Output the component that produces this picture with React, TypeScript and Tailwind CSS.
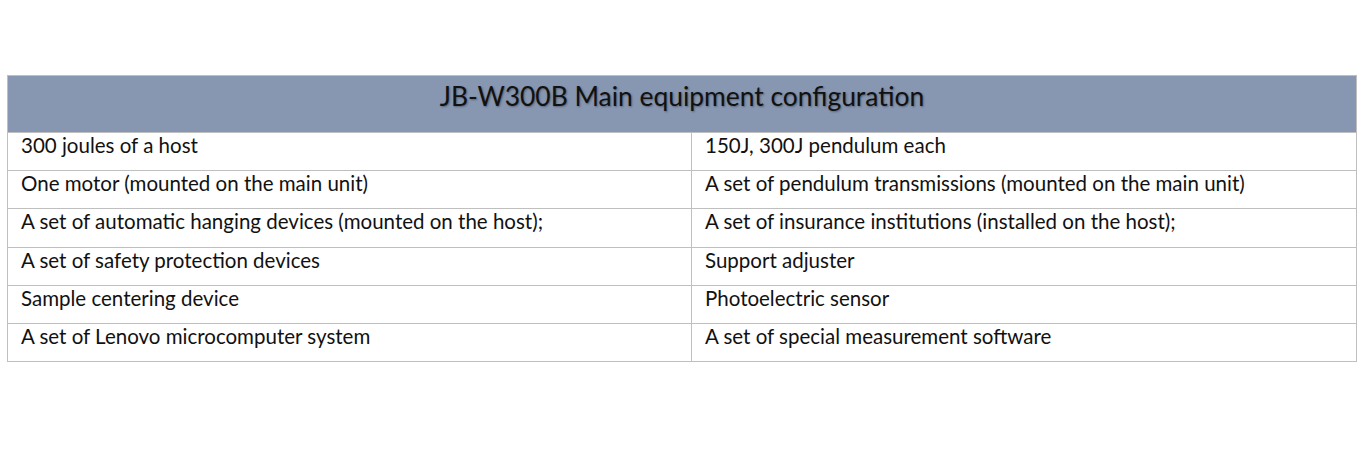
import React from "react";

const rows: [string, string][] = [
  ["300 joules of a host", "150J, 300J pendulum each"],
  ["One motor (mounted on the main unit)", "A set of pendulum transmissions (mounted on the main unit)"],
  ["A set of automatic hanging devices (mounted on the host);", "A set of insurance institutions (installed on the host);"],
  ["A set of safety protection devices", "Support adjuster"],
  ["Sample centering device", "Photoelectric sensor"],
  ["A set of Lenovo microcomputer system", "A set of special measurement software"],
];

export default function App() {
  return (
    <div className="w-[1359px] h-[459px] bg-white pt-[75px] pl-[7px]" style={{ fontFamily: "Lato, 'Open Sans', sans-serif" }}>
      <div className="w-[1350px] border border-[#bfbfbf]">
        <div className="h-[56px] bg-[#8797b2] flex items-start justify-center pt-[4px] text-[26.4px] leading-[32px] text-[#111] [text-shadow:1px_1px_2px_rgba(0,0,0,0.35)]">
          JB-W300B Main equipment configuration
        </div>
        {rows.map(([a, b], i) => (
          <div key={i} className="grid grid-cols-[684px_1fr] h-[38.2px] border-t border-[#bfbfbf] text-[20.5px] leading-[24px] text-[#111]">
            <div className="pl-[13px] border-r border-[#bfbfbf]">{a}</div>
            <div className="pl-[13px]">{b}</div>
          </div>
        ))}
      </div>
    </div>
  );
}
